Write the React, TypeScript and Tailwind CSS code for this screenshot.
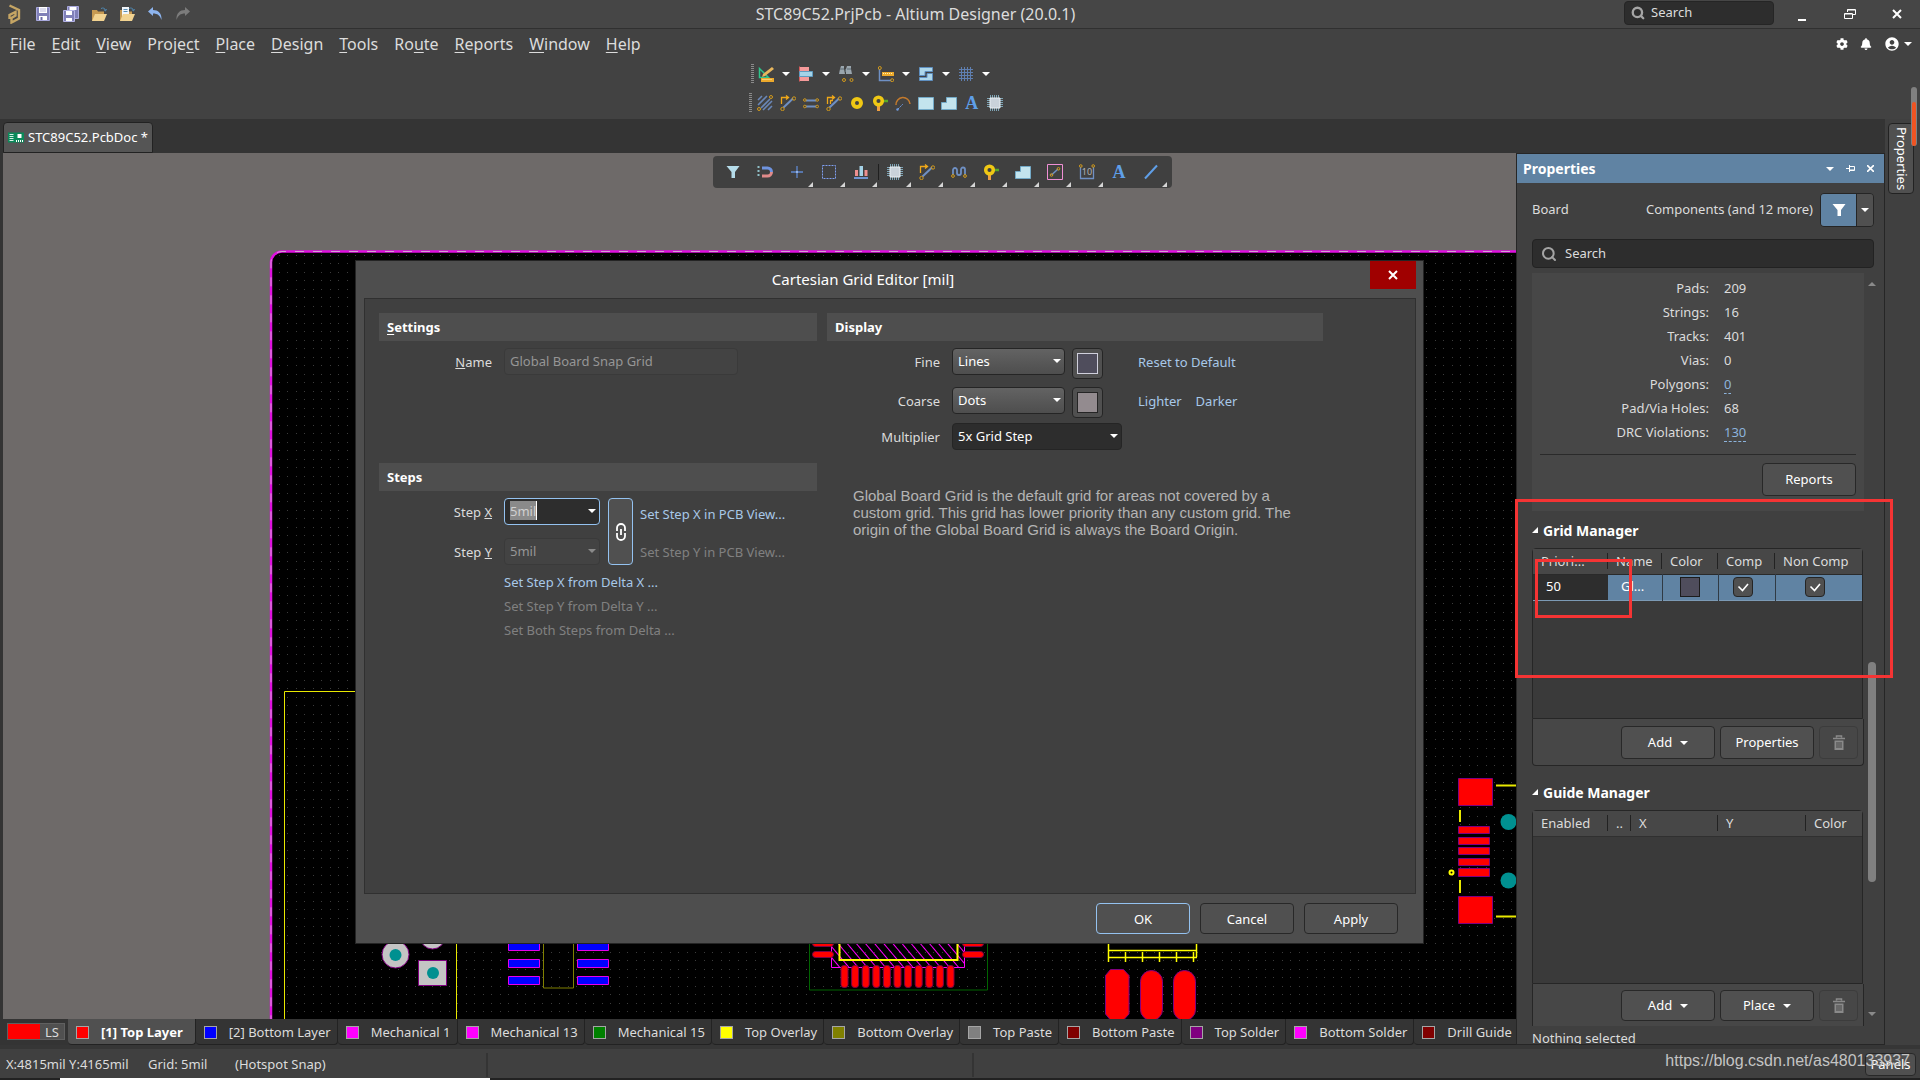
import type { ReactNode } from 'react';
import { Search } from 'lucide-react';
import { FaBell, FaCog } from 'react-icons/fa';
import { MdAccountCircle } from 'react-icons/md';

const menu = [
  { pre: '', key: 'F', post: 'ile' },
  { pre: '', key: 'E', post: 'dit' },
  { pre: '', key: 'V', post: 'iew' },
  { pre: 'Proje', key: 'c', post: 't' },
  { pre: '', key: 'P', post: 'lace' },
  { pre: '', key: 'D', post: 'esign' },
  { pre: '', key: 'T', post: 'ools' },
  { pre: 'Ro', key: 'u', post: 'te' },
  { pre: '', key: 'R', post: 'eports' },
  { pre: '', key: 'W', post: 'indow' },
  { pre: '', key: 'H', post: 'elp' },
];

const layers = [
  { name: '[1] Top Layer', color: 'bg-[#ff0000]', active: true },
  { name: '[2] Bottom Layer', color: 'bg-[#0000ff]' },
  { name: 'Mechanical 1', color: 'bg-[#ff00ff]' },
  { name: 'Mechanical 13', color: 'bg-[#ff00ff]' },
  { name: 'Mechanical 15', color: 'bg-[#008000]' },
  { name: 'Top Overlay', color: 'bg-[#ffff00]' },
  { name: 'Bottom Overlay', color: 'bg-[#808000]' },
  { name: 'Top Paste', color: 'bg-[#808080]' },
  { name: 'Bottom Paste', color: 'bg-[#800000]' },
  { name: 'Top Solder', color: 'bg-[#800080]' },
  { name: 'Bottom Solder', color: 'bg-[#ff00ff]' },
  { name: 'Drill Guide', color: 'bg-[#800000]' },
];

const stats = [
  { label: 'Pads:', value: '209' },
  { label: 'Strings:', value: '16' },
  { label: 'Tracks:', value: '401' },
  { label: 'Vias:', value: '0' },
  { label: 'Polygons:', value: '0', link: true },
  { label: 'Pad/Via Holes:', value: '68' },
  { label: 'DRC Violations:', value: '130', link: true },
];

function Svg({ children, size = 'h-4 w-4' }: { children: ReactNode; size?: string }) {
  return (
    <svg viewBox="0 0 16 16" className={`${size} shrink-0`} fill="none" aria-hidden="true">
      {children}
    </svg>
  );
}

function Caret({ className = 'text-white' }: { className?: string }) {
  return (
    <svg viewBox="0 0 8 4" className={`h-1 w-2 shrink-0 ${className}`} aria-hidden="true">
      <path d="M0 0h8L4 4z" fill="currentColor" />
    </svg>
  );
}

/* ---------- icons ---------- */

function LogoIcon() {
  return (
    <svg viewBox="0 0 14 20" className="h-5 w-3.5" fill="none" aria-hidden="true">
      <path d="M2.500 1.500 12 6v8.500L4.500 18.500V14L8.500 11.500V8L2.500 11v4" stroke="#c5a564" strokeWidth="2.400" />
    </svg>
  );
}

function SaveIcon() {
  return (
    <Svg>
      <path d="M1.500 1.500h13v13h-13z" fill="#8080b8" stroke="#a9a9dd" />
      <path d="M4 1h8v6H4zM4 10h8v4H4z" fill="#fff" />
      <path d="M5.500 11h2v3h-2z" fill="#6c6ca6" />
      <path d="M5 3h6M5 5h6" stroke="#b9b9dd" />
    </Svg>
  );
}

function SaveAllIcon() {
  return (
    <Svg>
      <path d="M4.500.5h11v12h-11z" fill="#8080b8" stroke="#a9a9dd" />
      <path d="M6.500 1h7v3h-7z" fill="#fff" />
      <path d="M.5 4.500h11v11H.5z" fill="#8080b8" stroke="#b5b5e6" />
      <path d="M3 5h6v4H3zM3 12h6v3H3z" fill="#fff" />
    </Svg>
  );
}

function OpenIcon({ page = false }: { page?: boolean }) {
  return (
    <Svg>
      <path d="M1 4h5l1 1.500h6V15H1z" fill="#c79a52" />
      {page && <path d="M3 1h7v9H3z" fill="#f2f6fa" />}
      {page && <path d="M4.500 3.500h4M4.500 5.500h4" stroke="#5b8fb5" />}
      <path d="M4 8h12l-3 7H1z" fill="#f2d391" />
      <path d="M10 2.500c2-1 4-.5 4.500 2M12.800 3.500l1.700 1.500 1-2" stroke="#4f87b0" />
    </Svg>
  );
}

function UndoIcon() {
  return (
    <Svg>
      <path d="M1 5.500 6 1v3c5 0 9 3 8.500 10C13 9.500 10.500 7.500 6 7.500V10z" fill="#8db4ee" />
    </Svg>
  );
}

function RedoIcon() {
  return (
    <Svg>
      <path d="M15 5.500 10 1v3C5 4 1 7 1.500 14 3 9.500 5.500 7.500 10 7.500V10z" fill="#7c7c7c" />
    </Svg>
  );
}

function SketchIcon() {
  return (
    <Svg>
      <path d="M1.500 2.500v9h9z" stroke="#2fc48a" strokeWidth="1.500" />
      <path d="m4 11 1-3 9-7 2 2-9 7z" fill="#e9b75d" />
      <path d="M3 12h13v4H3z" fill="#eca92c" />
      <path d="M4.500 13.500h10" stroke="#fff3b0" strokeDasharray="1 1" />
    </Svg>
  );
}

function AlignIcon() {
  return (
    <Svg>
      <path d="M1 1h10v4H1zM1 11h10v4H1z" fill="#f59a9a" />
      <path d="M1.500.5v15" stroke="#d55c5c" />
      <path d="M1.500 5.500h13v5h-13z" fill="#a5d3e8" stroke="#5e9bc0" />
    </Svg>
  );
}

function FindIcon() {
  return (
    <Svg>
      <path d="M3 0h3v3l1 5H1l1-5zM10 0H9L8 3v5h6l-1-5V0z" fill="#9aa6ae" />
      <path d="M2 3h4M9 3h4M7.500 3v3" stroke="#5d6a72" />
      <circle cx="6" cy="14" r="1.500" stroke="#d29a1c" />
      <circle cx="13.500" cy="14" r="1.500" stroke="#d29a1c" />
    </Svg>
  );
}

function DimensionIcon() {
  return (
    <Svg>
      <path d="M1.500 3v11.500H13" stroke="#6f90c4" strokeWidth="1.500" />
      <circle cx="1.800" cy="2" r="1.500" stroke="#d29a1c" />
      <circle cx="14.200" cy="14.200" r="1.500" stroke="#d29a1c" />
      <path d="M4 6h12v4H4z" fill="#eca92c" />
      <path d="M5 7.500h10" stroke="#fff3b0" strokeDasharray="1 1" />
    </Svg>
  );
}

function RoomIcon() {
  return (
    <Svg>
      <path d="M1.500 1.500h13v4H7v4H1.500z" fill="#add7ea" stroke="#5e8fc0" />
      <path d="M14.500 7.500v7h-13v-3H9v-4z" fill="#add7ea" stroke="#5e8fc0" />
    </Svg>
  );
}

function GridIcon() {
  return (
    <Svg>
      <path d="M3.500 1v14M6.500 1v14M9.500 1v14M12.500 1v14M1 3.500h14M1 6.500h14M1 9.500h14M1 12.500h14" stroke="#5f7fb0" />
    </Svg>
  );
}

function HatchIcon() {
  return (
    <Svg>
      <path d="m1 5 4-4M1 10l9-9M4 13 13 4M6 15l9-9M11 15l4-4" stroke="#6a87b8" strokeWidth="1.600" />
      <circle cx="14" cy="2" r="1.500" stroke="#d29a1c" />
      <circle cx="2" cy="14" r="1.500" stroke="#d29a1c" />
    </Svg>
  );
}

function RouteIcon({ double = false }: { double?: boolean }) {
  return (
    <Svg>
      <path d="M3.500 12.500 13 3.500" stroke="#6f90c4" strokeWidth="2" />
      <circle cx="14" cy="3.500" r="1.700" stroke="#d29a1c" />
      <circle cx="2.500" cy="14" r="1.700" stroke="#d29a1c" />
      <path d="M1.500 9V2.500h6M6 .5l2.500 2L6 4.500" stroke="#f0a818" strokeWidth="1.300" />
      {double && <path d="M4.500 9V5.500H7" stroke="#f0a818" strokeWidth="1.300" />}
    </Svg>
  );
}

function DiffPairIcon() {
  return (
    <Svg>
      <path d="M3 5.500h10M3 11.500h10" stroke="#6f90c4" strokeWidth="2" />
      <g stroke="#d29a1c">
        <circle cx="1.800" cy="5" r="1.300" />
        <circle cx="14.200" cy="5" r="1.300" />
        <circle cx="1.800" cy="11.500" r="1.300" />
        <circle cx="14.200" cy="11.500" r="1.300" />
      </g>
    </Svg>
  );
}

function ViaIcon() {
  return (
    <Svg>
      <circle cx="8" cy="8" r="4" stroke="#f0c814" strokeWidth="4" />
    </Svg>
  );
}

function PadIcon() {
  return (
    <Svg>
      <path d="M10 6h6" stroke="#58a828" strokeWidth="2.500" />
      <path d="M6.500 9v7" stroke="#f0a040" strokeWidth="3" />
      <circle cx="6.500" cy="6" r="3.800" stroke="#f0c814" strokeWidth="3.500" />
    </Svg>
  );
}

function ArcIcon() {
  return (
    <Svg>
      <path d="M1 10A7 7 0 0 1 15 9" stroke="#c47a2c" strokeWidth="1.500" />
      <path d="m3 14 5-5" stroke="#6f9ae0" strokeDasharray="2 1" />
      <circle cx="2.500" cy="14.500" r="1.200" fill="#6f9ae0" />
    </Svg>
  );
}

function FillIcon() {
  return (
    <Svg>
      <path d="M.5 2.500h15v12H.5z" fill="#c3e4ee" stroke="#73aac8" />
    </Svg>
  );
}

function PolygonIcon() {
  return (
    <Svg>
      <path d="M.5 7.500h5v-5h10v12H.5z" fill="#c3e4ee" stroke="#73aac8" />
    </Svg>
  );
}

function ChipIcon() {
  return (
    <Svg>
      <path d="M3.500 0v16M5.500 0v16M7.500 0v16M9.500 0v16M11.500 0v16M0 3.500h16M0 5.500h16M0 7.500h16M0 9.500h16M0 11.500h16" stroke="#7fa4b5" />
      <path d="M3 3h10v10H3z" fill="#c9d2da" stroke="#e8eef2" />
    </Svg>
  );
}

function LetterIcon() {
  return <span className="w-4 text-center font-['Liberation_Serif',serif] text-[18px] leading-4 font-bold text-[#5f9fe8]">A</span>;
}

function FunnelIcon({ className }: { className: string }) {
  return (
    <Svg>
      <path d="M1.500 2h13L10 8v6H6.500V8z" className={className} />
    </Svg>
  );
}

function MagnetIcon() {
  return (
    <Svg>
      <path d="M5 4h5.500a4 4 0 0 1 4 4" stroke="#6f94e0" strokeWidth="3" />
      <path d="M5 12h5.500a4 4 0 0 0 4-4" stroke="#e08a8a" strokeWidth="3" />
      <path d="M1.500 2v12" stroke="#8fc0c8" strokeWidth="2" strokeDasharray="2 2" />
    </Svg>
  );
}

function CrossIcon() {
  return (
    <Svg>
      <path d="M8 2v12M2 8h12" stroke="#5f88cf" strokeWidth="1.300" />
      <path d="M8 7v2M7 8h2" stroke="#a9c4f0" />
    </Svg>
  );
}

function SelectionIcon() {
  return (
    <Svg>
      <path d="M1.500 1.500h13v13h-13z" stroke="#7f9ff0" strokeDasharray="2 1" />
    </Svg>
  );
}

function AlignBarsIcon() {
  return (
    <Svg>
      <path d="M2 6h3v6H2zM11.500 6h3v6h-3z" fill="#ee8f8f" />
      <path d="M6.500 2h3.500v10H6.500z" fill="#a5d3e8" />
      <path d="M1 14h14" stroke="#6f94d0" strokeWidth="2" />
    </Svg>
  );
}

function TuneIcon() {
  return (
    <Svg>
      <path d="M2 11V6a2 2 0 0 1 4 0v3a2 2 0 0 0 4 0V5.500a2 2 0 0 1 4 0V11" stroke="#6f90c4" strokeWidth="1.800" />
      <circle cx="2" cy="12" r="1.400" stroke="#d29a1c" />
      <circle cx="14" cy="12" r="1.400" stroke="#d29a1c" />
    </Svg>
  );
}

function RuleIcon() {
  return (
    <Svg>
      <path d="M.5.5h15v15H.5z" stroke="#ef8fd4" />
      <path d="m4.500 11 6.500-6" stroke="#6f90c4" strokeWidth="1.500" />
      <circle cx="4.500" cy="11" r="1.300" stroke="#d29a1c" />
      <circle cx="11.500" cy="4.800" r="1.300" stroke="#d29a1c" />
    </Svg>
  );
}

function MeasureIcon() {
  return (
    <span className="relative">
      <Svg>
        <path d="M1.500 3v11.500h13V3" stroke="#6f90c4" strokeWidth="1.300" />
        <circle cx="1.800" cy="2" r="1.300" stroke="#d29a1c" />
        <circle cx="14.200" cy="2" r="1.300" stroke="#d29a1c" />
      </Svg>
      <span className="absolute inset-x-0 top-1 text-center text-[9px] leading-2 text-[#b5b5b5]">10</span>
    </span>
  );
}

function LineIcon() {
  return (
    <Svg>
      <path d="M2 14.500 14 1.500" stroke="#5f9fe8" strokeWidth="2" />
    </Svg>
  );
}

function TrashIcon() {
  return (
    <Svg>
      <path d="M5.500 2.500V1h5v1.500M2 3.500h12" stroke="#8a8a8a" strokeWidth="1.500" />
      <path d="M3.500 5.500h9V15h-9z" fill="#8a8a8a" />
      <path d="M6 7v6M8 7v6M10 7v6" stroke="#474747" />
    </Svg>
  );
}

function CloseIcon() {
  return (
    <svg viewBox="0 0 10 10" className="h-2.5 w-2.5" aria-hidden="true">
      <path d="m1 1 8 8M9 1 1 9" stroke="currentColor" strokeWidth="2" />
    </svg>
  );
}

/* ---------- header ---------- */

function TitleBar() {
  return (
    <header className="flex h-[29px] shrink-0 items-center border-b border-[#303030] bg-[#464646]">
      <div className="flex flex-1 items-center gap-3 pl-[7px]">
        <LogoIcon />
        <button aria-label="Save" className="ml-0.5"><SaveIcon /></button>
        <button aria-label="Save all"><SaveAllIcon /></button>
        <button aria-label="Open"><OpenIcon /></button>
        <button aria-label="Open project"><OpenIcon page /></button>
        <button aria-label="Undo"><UndoIcon /></button>
        <button aria-label="Redo"><RedoIcon /></button>
      </div>
      <h1 className="pr-24 text-[16px]">STC89C52.PrjPcb - Altium Designer (20.0.1)</h1>
      <div className="flex flex-1 items-center justify-end">
        <label className="mb-[3px] flex h-6 w-[150px] items-center gap-1.5 rounded-sm border border-[#252525] bg-[#2d2d2d] pl-1.5">
          <Search className="h-3.5 w-3.5 shrink-0 text-[#a5a5a5]" strokeWidth={4} />
          <input aria-label="Search" placeholder="Search" className="w-full bg-transparent text-[13px] outline-none placeholder:text-[#dcdcdc]" />
        </label>
        <button aria-label="Minimize" className="ml-6 flex h-4 w-2.5 items-end"><span className="mb-px h-0.5 w-2 bg-white" /></button>
        <button aria-label="Restore" className="ml-9">
          <svg viewBox="0 0 12 12" className="h-3 w-3" fill="none" aria-hidden="true">
            <path d="M3.500 4V1.500h8v5H9M.5 5.500h8v5h-8zM3 2h8M1 6h7" stroke="#fff" />
          </svg>
        </button>
        <button aria-label="Close" className="mr-[18px] ml-9 text-white"><CloseIcon /></button>
      </div>
    </header>
  );
}

function MenuBar() {
  return (
    <nav className="flex h-[30px] shrink-0 items-center justify-between">
      <ul className="flex gap-4 pl-2.5 text-[16px]">
        {menu.map((m) => (
          <li key={m.key + m.post}>
            <a href="#menu">
              {m.pre}
              <span className="underline underline-offset-2">{m.key}</span>
              {m.post}
            </a>
          </li>
        ))}
      </ul>
      <div className="flex items-center gap-3 pr-2 text-white">
        <button aria-label="Settings"><FaCog className="h-3 w-3" /></button>
        <button aria-label="Notifications"><FaBell className="h-3 w-3" /></button>
        <button aria-label="Account" className="flex items-center gap-1">
          <MdAccountCircle className="h-4 w-4" />
          <Caret />
        </button>
      </div>
    </nav>
  );
}

function Grip() {
  return <span className="h-[19px] w-[3px] shrink-0 bg-[repeating-linear-gradient(to_bottom,#8a8a8a_0_1px,transparent_1px_2px)]" />;
}

function Toolbars() {
  const utilities = [SketchIcon, AlignIcon, FindIcon, DimensionIcon, RoomIcon, GridIcon];
  return (
    <div className="flex h-[60px] shrink-0 flex-col pt-0.5 pl-[39%]">
      <div className="ml-0.5 flex h-[26px] items-center">
        <Grip />
        {utilities.map((Icon, i) => (
          <button key={i} aria-label="Utility tool" className="flex w-10 items-center gap-2 pl-1">
            <Icon />
            <Caret />
          </button>
        ))}
      </div>
      <div className="flex h-[34px] items-center gap-[7px]">
        <Grip />
        <button aria-label="Hatch" className="-ml-0.5"><HatchIcon /></button>
        <button aria-label="Route"><RouteIcon /></button>
        <button aria-label="Differential pair"><DiffPairIcon /></button>
        <button aria-label="Multi route"><RouteIcon double /></button>
        <button aria-label="Via"><ViaIcon /></button>
        <button aria-label="Pad"><PadIcon /></button>
        <button aria-label="Arc"><ArcIcon /></button>
        <button aria-label="Fill"><FillIcon /></button>
        <button aria-label="Polygon"><PolygonIcon /></button>
        <button aria-label="String" className="flex"><LetterIcon /></button>
        <button aria-label="Component"><ChipIcon /></button>
      </div>
    </div>
  );
}

/* ---------- canvas ---------- */

function ActiveBar() {
  const tools = [
    { icon: <FunnelIcon className="fill-[#b5dcea]" /> },
    { icon: <MagnetIcon /> },
    { icon: <CrossIcon />, more: true },
    { icon: <SelectionIcon />, more: true },
    { icon: <AlignBarsIcon />, more: true, divider: true },
    { icon: <ChipIcon />, more: true },
    { icon: <RouteIcon />, more: true },
    { icon: <TuneIcon />, more: true },
    { icon: <PadIcon />, more: true },
    { icon: <PolygonIcon />, more: true },
    { icon: <RuleIcon />, more: true },
    { icon: <MeasureIcon />, more: true },
    { icon: <LetterIcon /> },
    { icon: <LineIcon />, more: true },
  ];
  return (
    <div className="absolute top-[3px] left-[710px] flex h-8 rounded-sm bg-[#404040] pr-[5px] pl-1">
      {tools.map((t, i) => (
        <button
          key={i}
          aria-label="Canvas tool"
          className={`relative flex w-8 items-center justify-center ${t.divider ? 'mr-0.5 after:absolute after:-right-0.5 after:h-4 after:w-px after:bg-[#1f1f1f]' : ''}`}
        >
          {t.icon}
          {t.more && (
            <svg viewBox="0 0 5 5" className="absolute right-0 bottom-px h-[5px] w-[5px]" aria-hidden="true">
              <path d="M5 0v5H0z" fill="#d5d5d5" />
            </svg>
          )}
        </button>
      ))}
    </div>
  );
}

function Board() {
  const pins = Array.from({ length: 11 }, (_, i) => 841 + i * 10.6);
  return (
    <svg viewBox="3 153 1513 866" preserveAspectRatio="xMinYMin slice" className="absolute inset-0 h-full w-full" fill="none" aria-hidden="true">
      <defs>
        <pattern id="dots" x="279" y="255" width="17" height="17" patternUnits="userSpaceOnUse">
          <path d="M0 0h1v1H0zM8 0h1v1H8zM0 8h1v1H0zM8 8h1v1H8z" fill="#3c3c3c" />
        </pattern>
        <pattern id="hatch" width="7" height="7" patternUnits="userSpaceOnUse" patternTransform="rotate(-40)">
          <path d="M.5 0v8" stroke="#ff00ff" />
        </pattern>
      </defs>
      <path d="M1600 251H282a12 12 0 0 0-12 12v800h1330z" fill="#000" />
      <path d="M1600 251H282a12 12 0 0 0-12 12v800h1330z" fill="url(#dots)" />
      <path d="M1600 251.500H282a11 11 0 0 0-11 11.500v800" stroke="#e010e0" strokeWidth="2.500" />
      <path d="M1600 251.500H282a11 11 0 0 0-11 11.500v800" stroke="#d8a0d8" strokeDasharray="9 9" />

      <path d="M600 691.500H284.500V1040M456.500 900v140" stroke="#e8e800" />

      <g fill="#c4c4c4" stroke="#800080">
        <circle cx="395.500" cy="954.500" r="13.500" />
        <circle cx="432.500" cy="936.500" r="12.500" />
        <path d="M418.500 960.500h28v25h-28z" />
      </g>
      <circle cx="395.500" cy="955" r="6" fill="#009090" />
      <circle cx="433" cy="973" r="6" fill="#009090" />

      <path d="M508.500 941.500h31v9h-31zM508.500 959.500h31v8h-31zM508.500 976.500h31v8h-31zM577.500 941.500h31v9h-31zM577.500 959.500h31v8h-31zM577.500 976.500h31v8h-31z" fill="#0000ff" stroke="#e800e8" />
      <path d="M543.500 930v58h30v-58" stroke="#808000" />

      <path d="M809.500 930v60h178v-60" stroke="#006400" />
      <path d="M831.500 930v37.500h133V930z" fill="url(#hatch)" stroke="#ff00ff" />
      <path d="M839.500 930v30h118v-30" stroke="#ffff00" strokeWidth="2" />
      <g fill="#ff0000" stroke="#7a0046">
        <rect x="812.500" y="940.500" width="21" height="6" rx="3" />
        <rect x="812.500" y="951.500" width="21" height="6" rx="3" />
        <rect x="962.500" y="940.500" width="21" height="6" rx="3" />
        <rect x="962.500" y="951.500" width="21" height="6" rx="3" />
        {pins.map((x) => (
          <rect key={x} x={x} y="965.500" width="7" height="22" rx="3" />
        ))}
      </g>

      <path d="M1108.500 930v32M1196.500 930v27M1108 950.500h89M1108 957.500h89M1125.500 952v10M1142.500 952v10M1159.500 952v10M1176.500 952v10M1193.500 952v10" stroke="#ffff00" strokeWidth="1.500" />
      <g fill="#ff0000" stroke="#800080">
        <path d="m1110.500 969.500h13l5.500 6V1014l-5 5.500h-14l-4.500-5.500v-38.500z" />
        <rect x="1140.500" y="970.500" width="22" height="50" rx="11" />
        <rect x="1173.500" y="970.500" width="22" height="50" rx="11" />
        <path d="M1458.500 778.500h34v27h-34zM1458.500 896.500h34v27h-34z" />
        <path d="M1458.500 826.500h31v7h-31zM1458.500 837.500h31v7h-31zM1458.500 847.500h31v7h-31zM1458.500 858.500h31v7h-31zM1458.500 868.500h31v8h-31z" />
      </g>
      <path d="M1496 785.500h104M1496 916.500h104M1460 810v12M1460 880v13" stroke="#e8e800" strokeWidth="2" />
      <circle cx="1451.500" cy="872.500" r="2" stroke="#ffff00" strokeWidth="2" />
      <circle cx="1508.500" cy="822" r="8" fill="#009090" />
      <circle cx="1508.500" cy="880.500" r="8" fill="#009090" />
    </svg>
  );
}

/* ---------- grid editor dialog ---------- */

function SectionHeader({ children }: { children: ReactNode }) {
  return <h3 className="flex h-7 items-center bg-[#4e4e4e] pl-2 text-[13px] font-bold text-white">{children}</h3>;
}

function Dropdown({ id, value, tone, width }: { id: string; value: string; tone: string; width: string }) {
  return (
    <div className={`relative h-[27px] ${width}`}>
      <select id={id} className={`h-full w-full appearance-none rounded-sm border border-[#252525] pb-0.5 pl-[5px] text-[13px] text-white ${tone}`}>
        <option>{value}</option>
      </select>
      <span className="pointer-events-none absolute top-[11px] right-1"><Caret /></span>
    </div>
  );
}

function Swatch({ label, color }: { label: string; color: string }) {
  return (
    <button aria-label={label} className="flex h-[31px] w-[31px] items-center justify-center rounded-sm border border-[#252525] bg-[#505050]">
      <span className={`h-[21px] w-[21px] border ${color}`} />
    </button>
  );
}

function GridEditor() {
  const raised = 'bg-linear-to-b from-[#636363] to-[#4e4e4e]';
  return (
    <section
      role="dialog"
      aria-label="Cartesian Grid Editor"
      className="absolute top-[107px] left-[352px] flex h-[684px] w-[1069px] flex-col border border-[#242424] bg-[#4e4e4e] text-[13px] leading-5 text-[#dcdcdc]"
    >
      <div className="flex h-[37px] shrink-0 items-start pr-[7px]">
        <h2 className="flex-1 self-center pb-0.5 text-center text-[15px] text-white">Cartesian Grid Editor [mil]</h2>
        <button aria-label="Close" className="flex h-7 w-[46px] items-center justify-center bg-[#a00000] text-white"><CloseIcon /></button>
      </div>

      <div className="mr-[7px] ml-2 flex flex-1 gap-2.5 border border-[#303030] bg-[#404040] p-[14px]">
        <div className="w-[438px]">
          <SectionHeader><span className="underline underline-offset-2">S</span>ettings</SectionHeader>
          <div className="mt-[7px] flex gap-3">
            <label htmlFor="grid-name" className="w-[113px] pt-1 text-right"><u>N</u>ame</label>
            <input
              id="grid-name"
              disabled
              defaultValue="Global Board Snap Grid"
              className="h-[27px] w-[234px] rounded-sm border border-[#3a3a3a] bg-[#434343] px-[5px] pb-0.5 text-[#969696]"
            />
          </div>

          <div className="mt-[88px]"><SectionHeader>Steps</SectionHeader></div>
          <div className="mt-[7px] flex">
            <div className="flex w-[113px] flex-col gap-5 pt-1 text-right">
              <label htmlFor="step-x">Step <u>X</u></label>
              <label htmlFor="step-y">Step <u>Y</u></label>
            </div>
            <div className="ml-3 flex w-24 flex-col gap-[13px]">
              <div className="flex h-[27px] items-center rounded-sm border border-[#94c2f0] bg-[#2d2d2d] pr-[3px] pb-0.5 pl-[5px]">
                <input id="step-x" defaultValue="5mil" className="h-[19px] w-[27px] border-r border-white bg-[#8a8a8a] text-[#d0d0d0] outline-none" />
                <span className="flex-1" />
                <Caret />
              </div>
              <div className="flex h-[27px] items-center rounded-sm border border-[#3a3a3a] bg-[#434343] pr-[3px] pb-0.5 pl-[5px]">
                <input id="step-y" disabled defaultValue="5mil" className="w-full min-w-0 bg-transparent text-[#969696]" />
                <Caret className="text-[#8a8a8a]" />
              </div>
            </div>
            <button aria-label="Link steps" className="ml-2 flex h-[67px] w-[25px] items-center justify-center rounded-sm border border-[#94c2f0] bg-[#505050]">
              <svg viewBox="0 0 12 18" className="h-[18px] w-3" fill="none" stroke="#fff" strokeWidth="1.800" aria-hidden="true">
                <path d="M2 8V5a4 4 0 0 1 8 0v3M2 10v3a4 4 0 0 0 8 0v-3M6 6v6" />
              </svg>
            </button>
            <div className="ml-[7px] flex flex-col items-start gap-[18px] pt-[6px]">
              <button className="text-[#a8c8e8]">Set Step X in PCB View...</button>
              <button disabled className="text-[#808080]">Set Step Y in PCB View...</button>
            </div>
          </div>
          <div className="mt-[5px] ml-[125px] flex flex-col items-start leading-6">
            <button className="text-[#a8c8e8]">Set Step X from Delta X ...</button>
            <button disabled className="text-[#808080]">Set Step Y from Delta Y ...</button>
            <button disabled className="text-[#808080]">Set Both Steps from Delta ...</button>
          </div>
        </div>

        <div className="w-[496px]">
          <SectionHeader>Display</SectionHeader>
          <div className="mt-[7px] flex">
            <label htmlFor="fine" className="mr-3 w-[113px] pt-1 text-right">Fine</label>
            <Dropdown id="fine" value="Lines" tone={raised} width="w-[113px]" />
            <div className="ml-[7px]"><Swatch label="Fine color" color="border-[#d0d0dc] bg-[#4f4d5c]" /></div>
            <button className="ml-[35px] h-7 text-[#a8c8e8]">Reset to Default</button>
          </div>
          <div className="mt-2 flex">
            <label htmlFor="coarse" className="mr-3 w-[113px] pt-1 text-right">Coarse</label>
            <Dropdown id="coarse" value="Dots" tone={raised} width="w-[113px]" />
            <div className="ml-[7px]"><Swatch label="Coarse color" color="border-[#252525] bg-[#938b8f]" /></div>
            <button className="ml-[35px] h-7 text-[#a8c8e8]">Lighter</button>
            <button className="ml-[14px] h-7 text-[#a8c8e8]">Darker</button>
          </div>
          <div className="mt-[5px] flex">
            <label htmlFor="multiplier" className="mr-3 w-[113px] pt-1 text-right">Multiplier</label>
            <Dropdown id="multiplier" value="5x Grid Step" tone="bg-[#2d2d2d]" width="w-[170px]" />
          </div>
          <p className="mt-[37px] w-[476px] pl-[26px] font-['Liberation_Sans',sans-serif] text-[15px] leading-[17px] text-[#b4b4b4]">
            Global Board Grid is the default grid for areas not covered by a custom grid. This grid has lower priority than any custom grid. The origin of the Global Board Grid is always the Board Origin.
          </p>
        </div>
      </div>

      <div className="flex h-[49px] shrink-0 items-center justify-end gap-2.5 pr-[25px] text-white">
        <button className="h-[31px] w-[94px] rounded-sm border border-[#94c2f0] bg-[#505050]">OK</button>
        <button className="h-[31px] w-[94px] rounded-sm border border-[#282828] bg-[#505050]">Cancel</button>
        <button className="h-[31px] w-[94px] rounded-sm border border-[#282828] bg-[#505050]">Apply</button>
      </div>
    </section>
  );
}

/* ---------- properties panel ---------- */

function GroupTitle({ children }: { children: ReactNode }) {
  return (
    <h3 className="flex h-[34px] items-center gap-[5px] pb-0.5 text-[14px] font-bold text-white">
      <svg viewBox="0 0 6 6" className="h-1.5 w-1.5" aria-hidden="true"><path d="M6 0v6H0z" fill="#fff" /></svg>
      {children}
    </h3>
  );
}

function PanelButton({ children, caret = false, height = 'h-[33px]' }: { children: ReactNode; caret?: boolean; height?: string }) {
  return (
    <button className={`flex w-[94px] items-center justify-center gap-2 rounded-sm border border-[#282828] bg-[#505050] text-white ${height}`}>
      {children}
      {caret && <Caret />}
    </button>
  );
}

function DeleteButton({ height = 'h-[33px]' }: { height?: string }) {
  return (
    <button disabled aria-label="Delete" className={`flex w-[39px] items-center justify-center rounded-sm border border-[#3c3c3c] ${height}`}>
      <TrashIcon />
    </button>
  );
}

function Check({ label }: { label: string }) {
  return (
    <span className="relative mx-auto block h-5 w-5">
      <input type="checkbox" aria-label={label} defaultChecked className="peer block h-5 w-5 appearance-none rounded-sm border border-[#252525] bg-[#505050]" />
      <svg viewBox="0 0 20 20" className="pointer-events-none absolute inset-0 hidden peer-checked:block" fill="none" aria-hidden="true">
        <path d="m5.500 9.500 4 4 5.500-6.500" stroke="#fff" strokeWidth="1.600" />
      </svg>
    </span>
  );
}

function HeadCell({ children, last = false }: { children: ReactNode; last?: boolean }) {
  return (
    <th className={`relative p-0 pl-2 text-left font-normal ${last ? '' : 'after:absolute after:top-1 after:right-0 after:h-4 after:w-px after:bg-[#222222]'}`}>
      {children}
    </th>
  );
}

function PropertiesPanel() {
  return (
    <aside className="relative flex w-[369px] shrink-0 flex-col border border-[#262626] bg-[#404040] text-[13px] text-[#dcdcdc]">
      <div className="flex h-[29px] shrink-0 items-center bg-[#6083a3] pr-2.5 pl-1.5 text-white">
        <h2 className="flex-1 text-[14px] font-bold">Properties</h2>
        <button aria-label="Panel menu" className="mr-3"><Caret /></button>
        <button aria-label="Pin" className="mr-3">
          <svg viewBox="0 0 9 7" className="h-[7px] w-[9px]" fill="none" aria-hidden="true">
            <path d="M0 3.500h3M3.500 0v7M4 1.500h4.500v4H4M4 5h4" stroke="#fff" />
          </svg>
        </button>
        <button aria-label="Close panel">
          <svg viewBox="0 0 7 7" className="h-[7px] w-[7px]" aria-hidden="true"><path d="m0 0 7 7M7 0 0 7" stroke="#fff" strokeWidth="1.600" /></svg>
        </button>
      </div>

      <div className="mt-2.5 flex h-[34px] shrink-0 items-center pr-2.5 pl-[15px]">
        <span className="flex-1">Board</span>
        <span>Components (and 12 more)</span>
        <div className="ml-[7px] flex h-full overflow-hidden rounded-sm border border-[#252525]">
          <button aria-label="Filter" className="flex w-9 items-center justify-center border-r border-[#252525] bg-[#6083a3]"><FunnelIcon className="fill-white" /></button>
          <button aria-label="Filter options" className="flex w-4 items-center justify-center bg-[#505050]"><Caret /></button>
        </div>
      </div>

      <label className="mt-3 mr-2.5 ml-[15px] flex h-[29px] shrink-0 items-center gap-2 rounded-sm border border-[#222222] bg-[#2d2d2d] pl-2">
        <Search className="h-4 w-4 shrink-0 text-[#a5a5a5]" strokeWidth={3} />
        <input aria-label="Search properties" placeholder="Search" className="w-full bg-transparent outline-none placeholder:text-[#dcdcdc]" />
      </label>

      <div className="mt-[5px] flex min-h-0 flex-1 overflow-hidden">
        <div className="ml-[15px] w-[332px]">
          <div className="bg-[#474747] px-2 pt-1 pb-2">
            <dl>
              {stats.map((s) => (
                <div key={s.label} className="flex h-6 items-center gap-[15px]">
                  <dt className="w-[169px] text-right">{s.label}</dt>
                  <dd>
                    {s.link ? (
                      <a href="#stat" className="border-b border-dashed border-[#8db4dc] text-[#8db4dc]">{s.value}</a>
                    ) : (
                      s.value
                    )}
                  </dd>
                </div>
              ))}
            </dl>
            <div className="mt-[9px] mb-[7px] flex flex-col items-end gap-2">
              <hr className="w-full border-[#2a2a2a]" />
              <PanelButton>Reports</PanelButton>
            </div>
          </div>

          <div className="mt-[3px]"><GroupTitle>Grid Manager</GroupTitle></div>
          <div className="h-[171px] w-[331px] rounded-t-sm border border-[#262626] bg-[#3a3a3a]">
            <table className="w-full table-fixed border-collapse">
              <colgroup>
                <col className="w-[75px]" />
                <col className="w-[54px]" />
                <col className="w-[56px]" />
                <col className="w-[57px]" />
                <col />
              </colgroup>
              <thead>
                <tr className="h-[25px] border-b border-[#2a2a2a] bg-[#474747]">
                  <HeadCell>Priori...</HeadCell>
                  <HeadCell>Name</HeadCell>
                  <HeadCell>Color</HeadCell>
                  <HeadCell>Comp</HeadCell>
                  <HeadCell last>Non Comp</HeadCell>
                </tr>
              </thead>
              <tbody>
                <tr className="h-[26px] border-b border-[#7c9ab5] bg-[#6083a3] text-white">
                  <td className="bg-[#2d2d2d] p-0 pl-[13px]">50</td>
                  <td className="border-r border-[#303a44] p-0 pl-[13px]">Gl...</td>
                  <td className="border-r border-[#303a44] p-0"><span className="mx-auto block h-5 w-5 border border-[#1c1c1c] bg-[#4f4d5c]" /></td>
                  <td className="border-r border-[#303a44] p-0 pr-[7px]"><Check label="Comp" /></td>
                  <td className="p-0 pr-[7px]"><Check label="Non Comp" /></td>
                </tr>
              </tbody>
            </table>
          </div>
          <div className="flex h-[47px] justify-end gap-[5px] rounded-b-sm border border-t-0 border-[#262626] bg-[#474747] pt-[7px] pr-[5px]">
            <PanelButton caret>Add</PanelButton>
            <PanelButton>Properties</PanelButton>
            <DeleteButton />
          </div>

          <div className="mt-2.5"><GroupTitle>Guide Manager</GroupTitle></div>
          <div className="h-[174px] w-[331px] rounded-t-sm border border-[#262626] bg-[#3a3a3a]">
            <table className="w-full table-fixed border-collapse">
              <colgroup>
                <col className="w-[75px]" />
                <col className="w-[23px]" />
                <col className="w-[87px]" />
                <col className="w-[88px]" />
                <col />
              </colgroup>
              <thead>
                <tr className="h-[25px] border-b border-[#303030] bg-[#474747]">
                  <HeadCell>Enabled</HeadCell>
                  <HeadCell>..</HeadCell>
                  <HeadCell>X</HeadCell>
                  <HeadCell>Y</HeadCell>
                  <HeadCell last>Color</HeadCell>
                </tr>
              </thead>
            </table>
          </div>
          <div className="flex h-[42px] justify-end gap-[5px] border-x border-[#262626] bg-[#474747] pt-[6px] pr-[5px]">
            <PanelButton caret height="h-[31px]">Add</PanelButton>
            <PanelButton caret height="h-[31px]">Place</PanelButton>
            <DeleteButton height="h-[31px]" />
          </div>
          <p className="mt-[3px]">Nothing selected</p>
        </div>

        <div className="flex flex-1 flex-col items-center pt-[9px] pr-1 pb-7">
          <svg viewBox="0 0 8 4" className="h-1 w-2" aria-hidden="true"><path d="M0 4h8L4 0z" fill="#8a8a8a" /></svg>
          <span className="h-[376px]" />
          <span className="h-[220px] w-2 rounded-full bg-[#808080]" />
          <span className="flex-1" />
          <Caret className="text-[#8a8a8a]" />
        </div>
      </div>

      {/* highlight frames over the grid manager */}
      <div className="pointer-events-none absolute top-[345px] -left-0.5 h-[179px] w-[378px] border-3 border-[#f53434]" />
      <div className="pointer-events-none absolute top-[405px] left-[18px] h-[59px] w-[97px] border-3 border-[#f53434]" />
    </aside>
  );
}

/* ---------- bottom bars ---------- */

function LayerTabs() {
  return (
    <div className="flex h-[26px] shrink-0 overflow-hidden bg-[#343434] text-[13px]">
      <button className="mt-1 mr-[3px] ml-1 flex h-[17px] w-[58px] shrink-0 items-center border border-[#606060] bg-[#505050]">
        <span className="h-full w-8 bg-[#ff0000]" />
        <span className="flex-1 text-center leading-4">LS</span>
      </button>
      {layers.map((l) => (
        <button
          key={l.name}
          className={`flex shrink-0 items-center gap-3 rounded-b-sm border-r border-b border-[#222222] pt-0.5 pl-2 whitespace-nowrap ${l.active ? 'bg-[#505050] pr-3 font-bold text-white' : 'bg-[#343434] pr-[6px]'}`}
        >
          <span className={`h-[13px] w-[13px] border border-[#a5a5a5] ${l.color}`} />
          {l.name}
        </button>
      ))}
    </div>
  );
}

function StatusBar() {
  return (
    <footer className="relative flex h-[33px] shrink-0 items-center border-t-4 border-[#363636] bg-[#404040] pt-0.5 pl-1.5 text-[13px]">
      <span className="w-[142px]">X:4815mil Y:4165mil</span>
      <span className="w-[87px]">Grid: 5mil</span>
      <span className="w-[251px]">(Hotspot Snap)</span>
      <span className="h-6 w-[488px] border-x-2 border-[#343434]" />
      <span className="flex-1" />
      <button className="mr-1 flex h-[23px] w-[51px] items-center justify-center rounded-sm border border-[#282828] bg-[#505050] text-white">Panels</button>
      <span className="pointer-events-none absolute top-0 right-2.5 font-['Liberation_Sans',sans-serif] text-[16px] text-[#c4c4c4]">
        https://blog.csdn.net/as480133937
      </span>
    </footer>
  );
}

export default function App() {
  return (
    <div className="relative flex h-screen flex-col overflow-hidden bg-[#424242] font-['Noto_Sans',sans-serif] text-[#dcdcdc]">
      <TitleBar />
      <MenuBar />
      <Toolbars />

      <main className="flex min-h-0 flex-1 bg-[#343434]">
        <div className="flex min-w-0 flex-1 flex-col">
          <div className="flex h-[34px] shrink-0 items-end pl-[3px]">
            <button className="flex h-[31px] items-center gap-1 rounded-t-sm border border-[#222222] bg-[#555555] px-1 text-[13px] text-white">
              <Svg>
                <path d="M0 2.500h16v10H0z" fill="#0b8a5a" />
                <path d="M1.500 4.500h4M1.500 6.500h4M1.500 8.500h4M1.500 10.500h4" stroke="#d9f0e6" />
                <path d="M9.500 4h4v4h-4z" fill="#fff" />
                <path d="M8.500 10v2M10.500 10v2M12.500 10v2M14.500 10v2" stroke="#fff" />
              </Svg>
              STC89C52.PcbDoc *
            </button>
          </div>
          <div className="flex min-h-0 flex-1">
            <div className="flex min-w-0 flex-1 flex-col pl-[3px]">
              <div className="relative min-h-0 flex-1 bg-[#6e6a69]">
                <Board />
                <ActiveBar />
                <GridEditor />
              </div>
              <LayerTabs />
            </div>
            <PropertiesPanel />
          </div>
        </div>
        <div className="w-[35px] shrink-0 bg-[#404040] pt-1 pl-[3px]">
          <button className="flex h-[71px] w-[26px] items-center justify-center rounded-sm border border-[#222222] bg-[#505050] text-[13px] text-white [writing-mode:vertical-rl]">
            Properties
          </button>
        </div>
      </main>

      <StatusBar />
      <div className="flex h-0.5 shrink-0 bg-[#222222]">
        <span className="ml-[60px] w-[430px] bg-white" />
      </div>

      {/* page scroll marker on the window edge */}
      <div className="absolute top-[87px] right-[3px] flex h-[59px] w-[6px] flex-col rounded-full bg-[#808080] pt-[15px]">
        <span className="mx-px flex-1 rounded-full bg-[#f05423]" />
      </div>
    </div>
  );
}
